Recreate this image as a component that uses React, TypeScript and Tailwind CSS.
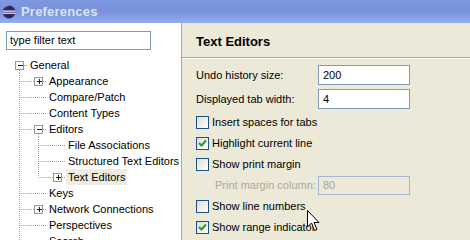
import React from "react";

type Guide = "pipe" | "tee" | "ell";

type Node = {
  label: string;
  level: number;
  guides: Guide[];
  box?: "open" | "closed";
  selected?: boolean;
};

const tree: Node[] = [
  { label: "General", level: 0, guides: [], box: "open" },
  { label: "Appearance", level: 1, guides: ["tee"], box: "closed" },
  { label: "Compare/Patch", level: 1, guides: ["tee"] },
  { label: "Content Types", level: 1, guides: ["tee"] },
  { label: "Editors", level: 1, guides: ["tee"], box: "open" },
  { label: "File Associations", level: 2, guides: ["pipe", "tee"] },
  { label: "Structured Text Editors", level: 2, guides: ["pipe", "tee"] },
  { label: "Text Editors", level: 2, guides: ["pipe", "ell"], box: "closed", selected: true },
  { label: "Keys", level: 1, guides: ["tee"] },
  { label: "Network Connections", level: 1, guides: ["tee"], box: "closed" },
  { label: "Perspectives", level: 1, guides: ["tee"] },
  { label: "Search", level: 1, guides: ["tee"] },
];

const COL = 19;
const DOT = { stroke: "#a0a0a0", strokeWidth: 1, strokeDasharray: "1 1" };

function TreeLines({ node }: { node: Node }) {
  const w = (node.level + 1) * COL - 1;
  const cx = node.level * COL + 9;
  return (
    <svg width={w} height={16} className="shrink-0">
      {node.guides.map((g, i) => {
        const x = i * COL + 9.5;
        return (
          <g key={i}>
            <line x1={x} y1={0} x2={x} y2={g === "ell" ? 8 : 16} {...DOT} />
            {g !== "pipe" && <line x1={x} y1={8.5} x2={(i + 1) * COL} y2={8.5} {...DOT} />}
          </g>
        );
      })}
      {node.box ? (
        <g>
          {node.level > 0 && <line x1={node.level * COL} y1={8.5} x2={cx - 4} y2={8.5} {...DOT} />}
          <line x1={cx + 5} y1={8.5} x2={w} y2={8.5} {...DOT} />
          {node.box === "open" && <line x1={cx + 0.5} y1={13} x2={cx + 0.5} y2={16} {...DOT} />}
          <rect x={cx - 3.5} y={4.5} width={8} height={8} fill="#fbfbf8" stroke="#8d9aa9" />
          <line x1={cx - 1} y1={8.5} x2={cx + 4} y2={8.5} stroke="#1a1a1a" />
          {node.box === "closed" && <line x1={cx + 1.5} y1={6} x2={cx + 1.5} y2={11} stroke="#1a1a1a" />}
        </g>
      ) : (
        <line x1={node.level * COL} y1={8.5} x2={w} y2={8.5} {...DOT} />
      )}
    </svg>
  );
}

function Checkbox({ checked, label }: { checked?: boolean; label: string }) {
  return (
    <div className="flex h-[21px] items-center gap-[3px]">
      <span className="flex h-[13px] w-[13px] items-center justify-center border border-[#1c5180] bg-gradient-to-br from-[#dcdcd7] to-white">
        {checked && (
          <svg width="9" height="9" viewBox="0 0 9 9">
            <path d="M1 4 L3.5 6.5 L8 1.5" fill="none" stroke="#21a121" strokeWidth="2" />
          </svg>
        )}
      </span>
      <span className="whitespace-nowrap">{label}</span>
    </div>
  );
}

function Cursor() {
  return (
    <svg width="13" height="22" viewBox="0 0 13 22" className="absolute left-[307px] top-[210px]">
      <path
        d="M0.5 0.5 L0.5 17 L4.5 13 L7.5 20.5 L10 19.5 L7 12.5 L12 12.5 Z"
        fill="white"
        stroke="black"
      />
    </svg>
  );
}

export default function App() {
  return (
    <div
      className="relative flex h-[240px] w-[470px] flex-col overflow-hidden bg-white text-[11px] text-black"
      style={{ fontFamily: '"Liberation Sans", Arial, sans-serif' }}
    >
      <div className="flex h-[23px] shrink-0 items-center gap-[5px] bg-gradient-to-b from-[#7e99e1] via-[#7891db] to-[#93aeee] pl-[2px]">
        <svg width="14" height="14" viewBox="0 0 14 14">
          <circle cx="7" cy="7" r="6.5" fill="#2d2660" />
          <path d="M2 3.5 A6.5 6.5 0 0 1 7 0.5" fill="none" stroke="#8a86b8" strokeWidth="1" />
          <rect x="0.5" y="5.5" width="13" height="1.2" fill="#f4f2ff" />
          <rect x="0.5" y="7.6" width="13" height="1.2" fill="#f4f2ff" />
        </svg>
        <span className="text-[13px] font-bold tracking-[0.2px] text-[#dbe5fa]">Preferences</span>
      </div>

      <div className="flex min-h-0 flex-1">
        <div className="flex w-[182px] shrink-0 flex-col overflow-hidden border-r border-[#aca899] bg-white">
          <div className="px-[6px] pt-[8px]">
            <div className="flex h-[19px] w-[145px] items-center border border-[#7f9db9] px-[3px]">type filter text</div>
          </div>
          <div className="mt-[7px] flex flex-col">
            {tree.map((node) => (
              <div key={node.label} className="flex h-[16px] items-center whitespace-nowrap pl-[10px]">
                <TreeLines node={node} />
                <span
                  className={`flex h-[16px] items-center whitespace-nowrap px-[2px] ${node.selected ? "bg-[#eeecdf]" : ""}`}
                >
                  {node.label}
                </span>
              </div>
            ))}
          </div>
        </div>

        <div className="flex min-w-0 flex-1 flex-col bg-[#ece9d8]">
          <div className="flex h-[34px] shrink-0 items-center pl-[14px] pt-[3px] text-[13px] font-bold">Text Editors</div>
          <div className="h-[2px] border-t border-[#aca899] bg-white" />
          <div className="flex flex-col pl-[14px] pt-[6px]">
            <div className="grid grid-cols-[122px_92px] gap-y-[4px]">
              <div className="flex h-[20px] items-center">Undo history size:</div>
              <div className="flex h-[20px] items-center border border-[#7f9db9] bg-white px-[4px]">200</div>
              <div className="flex h-[20px] items-center">Displayed tab width:</div>
              <div className="flex h-[20px] items-center border border-[#7f9db9] bg-white px-[4px]">4</div>
            </div>
            <div className="mt-[3px] flex flex-col">
              <Checkbox label="Insert spaces for tabs" />
              <Checkbox checked label="Highlight current line" />
              <Checkbox label="Show print margin" />
              <div className="grid h-[21px] grid-cols-[122px_92px] items-center">
                <span className="whitespace-nowrap pl-[19px] text-[#aca899]">Print margin column:</span>
                <span className="flex h-[19px] items-center border border-[#a5b6cf] px-[4px] text-[#aca899]">80</span>
              </div>
              <Checkbox label="Show line numbers" />
              <Checkbox checked label="Show range indicator" />
            </div>
          </div>
        </div>
      </div>

      <Cursor />
    </div>
  );
}
